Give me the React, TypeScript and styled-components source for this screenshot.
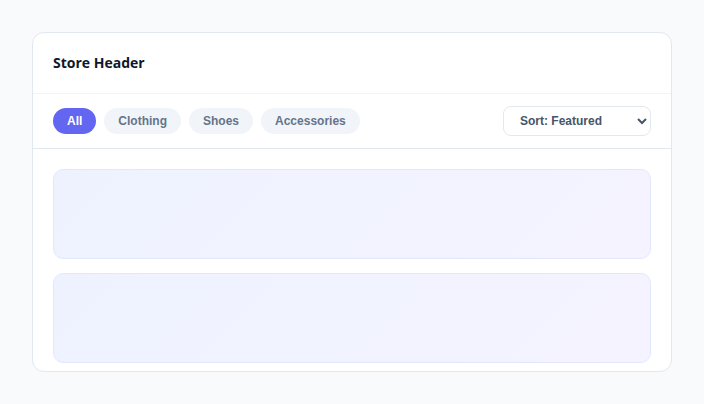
import React from 'react'
import styled, { createGlobalStyle } from 'styled-components'

const GlobalStyle = createGlobalStyle`
  html, body {
    margin: 0;
    padding: 0;
    background: #f8fafc;
  }
  body {
    font-family: "Liberation Sans", Arial, sans-serif;
  }
`

const Page = styled.div`
  padding: 32px;
`

const Card = styled.div`
  width: 640px;
  height: 340px;
  box-sizing: border-box;
  background: #ffffff;
  border: 1px solid #e2e8f0;
  border-radius: 12px;
  overflow: hidden;
  display: flex;
  flex-direction: column;
`

const Header = styled.div`
  padding: 20px;
  border-bottom: 1px solid #f1f5f9;
`

const Title = styled.h1`
  margin: 0;
  font-family: "Open Sans", "Noto Sans", sans-serif;
  font-size: 14px;
  line-height: 20px;
  font-weight: 700;
  color: #0f172a;
`

const Toolbar = styled.div`
  display: flex;
  align-items: center;
  justify-content: space-between;
  padding: 12px 20px;
  border-bottom: 1px solid #e2e8f0;
`

const Filters = styled.div`
  display: flex;
  gap: 8px;
`

const Pill = styled.button<{ $active?: boolean }>`
  border: none;
  border-radius: 999px;
  height: 26px;
  padding: 0 14px;
  font-family: "Liberation Sans", Arial, sans-serif;
  font-size: 12px;
  font-weight: 700;
  background: ${(p) => (p.$active ? '#6366f1' : '#f1f5f9')};
  color: ${(p) => (p.$active ? '#ffffff' : '#64748b')};
  cursor: pointer;
`

const SortSelect = styled.select`
  width: 148px;
  height: 30px;
  padding: 0 8px 0 12px;
  border: 1px solid #e2e8f0;
  border-radius: 8px;
  background: #ffffff;
  font-family: "Liberation Sans", Arial, sans-serif;
  font-size: 12px;
  font-weight: 700;
  color: #475569;
`

const Content = styled.div`
  padding: 20px;
  display: flex;
  flex-direction: column;
  gap: 14px;
`

const Placeholder = styled.div`
  height: 90px;
  box-sizing: border-box;
  border: 1px solid #e0e7ff;
  border-radius: 10px;
  background: linear-gradient(135deg, #eef2ff 0%, #f5f3ff 100%);
`

const categories = ['All', 'Clothing', 'Shoes', 'Accessories']

const App: React.FC = () => {
  const [active, setActive] = React.useState('All')
  return (
    <>
      <GlobalStyle />
      <Page>
        <Card>
          <Header>
            <Title>Store Header</Title>
          </Header>
          <Toolbar>
            <Filters>
              {categories.map((c) => (
                <Pill key={c} $active={c === active} onClick={() => setActive(c)}>
                  {c}
                </Pill>
              ))}
            </Filters>
            <SortSelect defaultValue="featured">
              <option value="featured">Sort: Featured</option>
              <option value="new">Sort: Newest</option>
              <option value="price">Sort: Price</option>
            </SortSelect>
          </Toolbar>
          <Content>
            <Placeholder />
            <Placeholder />
          </Content>
        </Card>
      </Page>
    </>
  )
}

export default App
